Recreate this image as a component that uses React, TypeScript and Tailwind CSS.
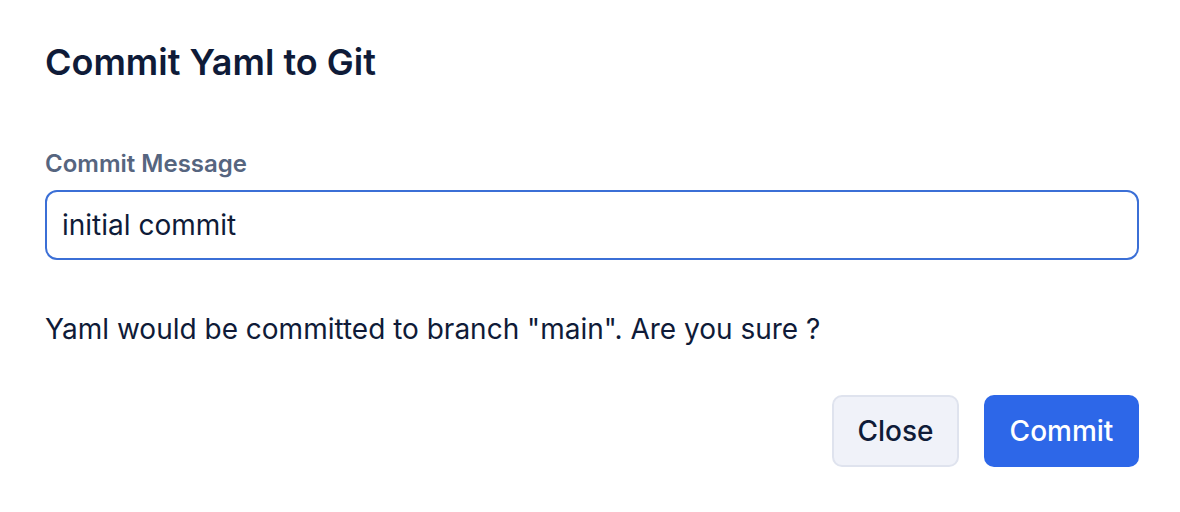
import React, { useState } from 'react'

export default function App() {
  const [message, setMessage] = useState('initial commit')

  return (
    <div
      className="w-[1180px] h-[512px] bg-white px-[45px] pt-[40px]"
      style={{ fontFamily: 'Inter, "Noto Sans", sans-serif' }}
    >
      <h1 className="text-[36px] leading-[44px] font-semibold text-[#0f1b38]">Commit Yaml to Git</h1>

      <div className="mt-[64px]">
        <label className="block text-[24px] leading-[32px] font-semibold text-[#56657f]">Commit Message</label>
        <input
          value={message}
          onChange={(e) => setMessage(e.target.value)}
          className="mt-[10px] w-[1094px] h-[70px] rounded-[12px] border-2 border-[#3b6fd6] px-[15px] text-[28px] text-[#0f1b38] outline-none"
        />
      </div>

      <p className="mt-[51px] text-[28px] leading-[36px] text-[#0f1b38]">
        Yaml would be committed to branch "main". Are you sure ?
      </p>

      <div className="mt-[48px] w-[1094px] flex justify-end gap-[25px]">
        <button className="w-[127px] h-[72px] rounded-[10px] border-2 border-[#dfe3ee] bg-[#f0f2f9] text-[28px] font-medium text-[#0f1b38]">
          Close
        </button>
        <button className="w-[155px] h-[72px] rounded-[10px] bg-[#2d67e8] text-[28px] font-medium text-white">
          Commit
        </button>
      </div>
    </div>
  )
}
